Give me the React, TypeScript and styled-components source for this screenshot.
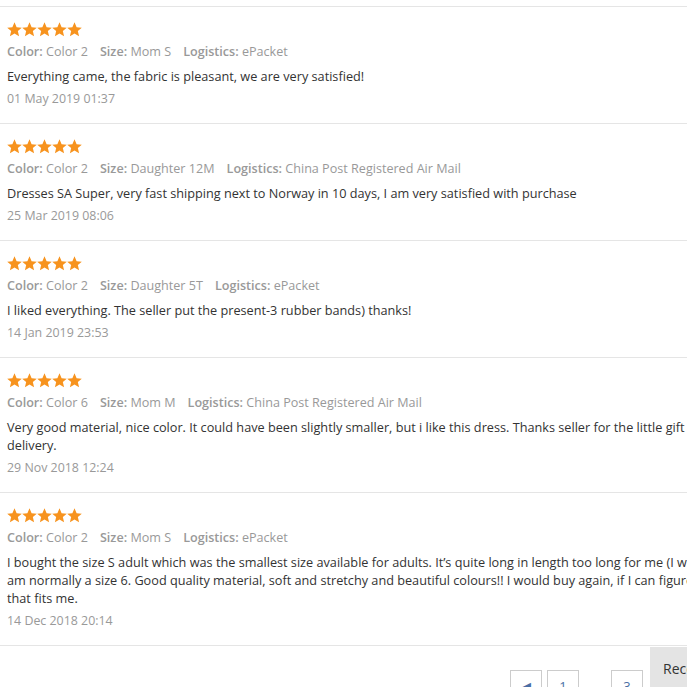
import React from "react";
import styled, { createGlobalStyle } from "styled-components";

const Global = createGlobalStyle`
  html, body { margin: 0; padding: 0; background: #fff; overflow: hidden; }
  body { font-family: "Open Sans", "Liberation Sans", sans-serif; }
`;

const Page = styled.div`
  width: 780px;
  padding-top: 6px;
`;

const List = styled.div`
  display: flex;
  flex-direction: column;
  border-top: 1px solid #e5e5e5;
`;

const Review = styled.div`
  padding: 14px 7px 15px;
  border-bottom: 1px solid #e5e5e5;
`;

const Stars = styled.div`
  display: flex;
  gap: 0;
  height: 16px;
  align-items: center;
`;

const Attrs = styled.div`
  display: flex;
  gap: 12px;
  margin-top: 6px;
  font-size: 12.6px;
  line-height: 18px;
  color: #999;
`;

const Attr = styled.span`
  b { font-weight: 600; }
`;

const Text = styled.div`
  margin-top: 6px;
  font-size: 12.7px;
  line-height: 18px;
  color: #333;
`;

const DateLine = styled.div`
  margin-top: 5px;
  font-size: 12.4px;
  line-height: 18px;
  color: #999;
`;

const Footer = styled.div`
  display: flex;
  align-items: flex-start;
  padding-left: 510px;
  height: 60px;
`;

const Pager = styled.div`
  display: flex;
  gap: 5px;
  margin-top: 24px;
`;

const PageBtn = styled.div`
  width: 30px;
  height: 30px;
  border: 1px solid #ccc;
  display: flex;
  align-items: center;
  justify-content: center;
  font-size: 13px;
  color: #4a6fa5;
  background: #fff;
`;

const Gap = styled.div`
  width: 22px;
  height: 32px;
  display: flex;
  align-items: flex-end;
  justify-content: center;
  font-size: 13px;
  color: #999;
`;

const RecButton = styled.div`
  margin-left: 7px;
  margin-top: 1px;
  background: #e4e4e4;
  padding: 12px 13px;
  font-size: 14px;
  color: #333;
  height: 60px;
  box-sizing: border-box;
  white-space: nowrap;
`;

const Star = () => (
  <svg width="15" height="15" viewBox="1 1.5 22 21">
    <path
      d="M12 1.5l3.1 7.1 7.6.7-5.8 5 1.8 7.5L12 17.8 5.3 21.8l1.8-7.5-5.8-5 7.6-.7z"
      fill="#f7931e"
    />
  </svg>
);

const reviews = [
  {
    color: "Color 2",
    size: "Mom S",
    logistics: "ePacket",
    text: "Everything came, the fabric is pleasant, we are very satisfied!",
    date: "01 May 2019 01:37",
  },
  {
    color: "Color 2",
    size: "Daughter 12M",
    logistics: "China Post Registered Air Mail",
    text: "Dresses SA Super, very fast shipping next to Norway in 10 days, I am very satisfied with purchase",
    date: "25 Mar 2019 08:06",
  },
  {
    color: "Color 2",
    size: "Daughter 5T",
    logistics: "ePacket",
    text: "I liked everything. The seller put the present-3 rubber bands) thanks!",
    date: "14 Jan 2019 23:53",
  },
  {
    color: "Color 6",
    size: "Mom M",
    logistics: "China Post Registered Air Mail",
    text: "Very good material, nice color. It could have been slightly smaller, but i like this dress. Thanks seller for the little gift and fast delivery.",
    date: "29 Nov 2018 12:24",
  },
  {
    color: "Color 2",
    size: "Mom S",
    logistics: "ePacket",
    text: "I bought the size S adult which was the smallest size available for adults. It’s quite long in length too long for me (I would say) as I am normally a size 6. Good quality material, soft and stretchy and beautiful colours!! I would buy again, if I can figure out a size that fits me.",
    date: "14 Dec 2018 20:14",
  },
];

export default function App() {
  return (
    <Page>
      <Global />
      <List>
        {reviews.map((r, i) => (
          <Review key={i}>
            <Stars>
              {[0, 1, 2, 3, 4].map((s) => (
                <Star key={s} />
              ))}
            </Stars>
            <Attrs>
              <Attr>
                <b>Color:</b> {r.color}
              </Attr>
              <Attr>
                <b>Size:</b> {r.size}
              </Attr>
              <Attr>
                <b>Logistics:</b> {r.logistics}
              </Attr>
            </Attrs>
            <Text>{r.text}</Text>
            <DateLine>{r.date}</DateLine>
          </Review>
        ))}
      </List>
      <Footer>
        <Pager>
          <PageBtn>◀</PageBtn>
          <PageBtn>1</PageBtn>
          <Gap>…</Gap>
          <PageBtn>3</PageBtn>
        </Pager>
        <RecButton>Recommend</RecButton>
      </Footer>
    </Page>
  );
}
